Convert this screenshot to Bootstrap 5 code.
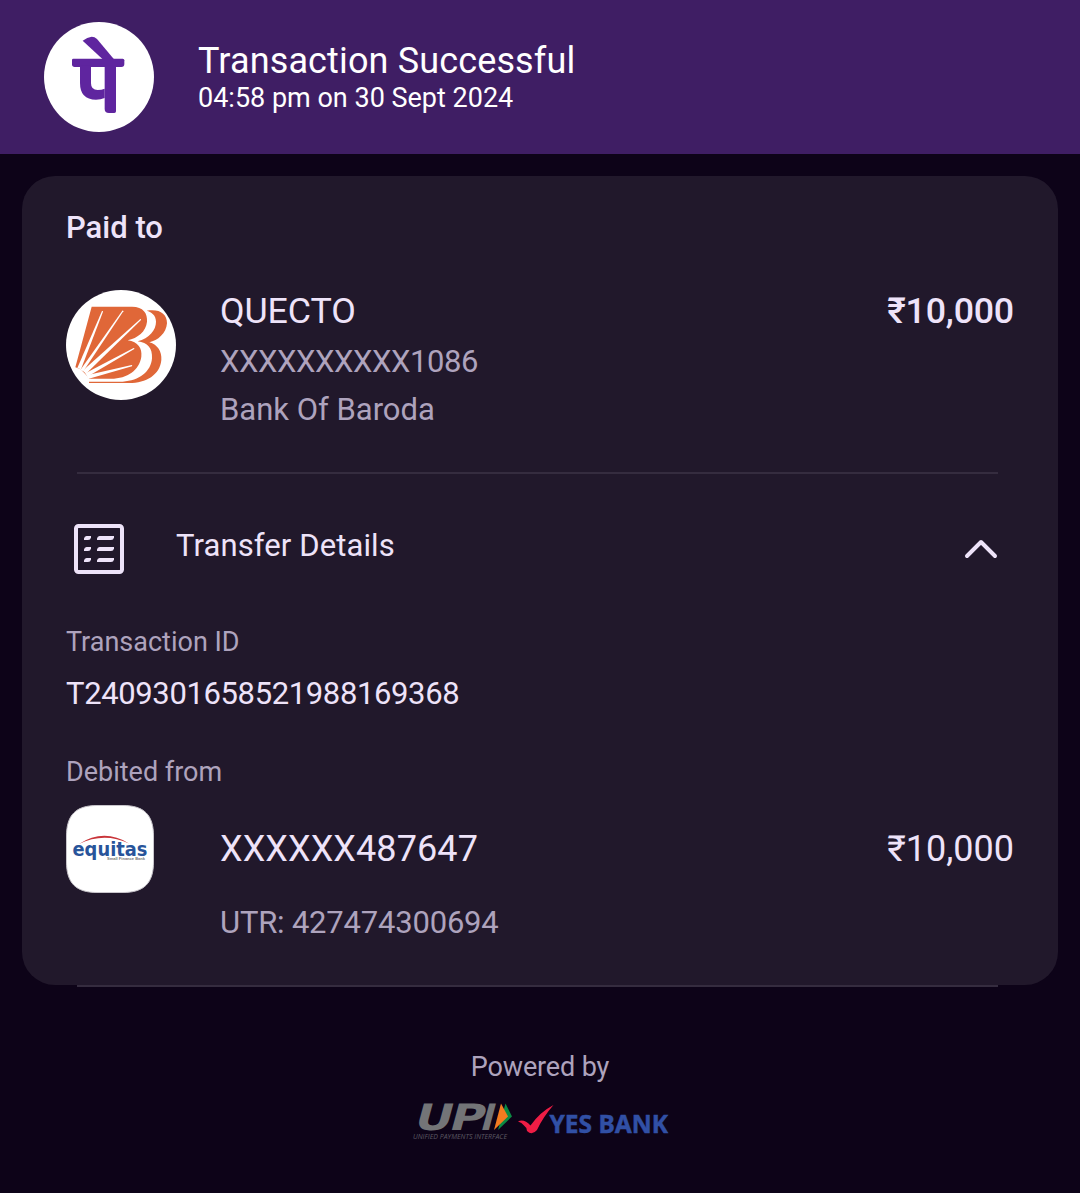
<!DOCTYPE html>
<html lang="en">
<head>
<meta charset="utf-8">
<meta name="viewport" content="width=device-width, initial-scale=1">
<title>Transaction Successful</title>
<link href="https://cdn.jsdelivr.net/npm/bootstrap@5.3.0/dist/css/bootstrap.min.css" rel="stylesheet">
<style>
  body { background: #0d0318; color: #eee3f9; font-family: Roboto, "Noto Sans", sans-serif; min-height: 1193px; }
  svg { display: block; flex: none; }
  .topbar { background: #3f1e64; height: 154px; padding: 22px 44px 0; gap: 44px; }
  .topbar-text { padding-top: 17px; }
  .fs-title { font-size: 36px; line-height: 44px; letter-spacing: .14px; }
  .fs-time { font-size: 27px; line-height: 30px; }
  .receipt { background: #21182b; border-radius: 33px; margin: 22px 22px 0; padding: 34px 44px 0; height: 809px; }
  .paid-label { font-size: 31px; line-height: 35px; font-weight: 500; margin-bottom: 45px; }
  .payee { gap: 44px; }
  .fs-name { font-size: 35.75px; line-height: 42px; letter-spacing: -.1px; }
  .amount-strong { font-weight: 500; letter-spacing: -.2px; }
  .fs-sub { font-size: 31px; line-height: 48px; }
  .acct-mask { letter-spacing: -.44px; padding-top: 1px; margin-top: 5px; }
  .muted { color: #aea3bd; }
  .rule { height: 2px; background: #352c3f; }
  .rule-inner { margin: 38px 16px 0 11px; }
  .rule-outer { margin: 0 82px 0 77px; }
  .details-head { margin: 50px 0 52px; padding: 0 16px 0 8px; height: 50px; }
  .details-title { font-size: 31px; line-height: 43px; margin-left: 52px; letter-spacing: .1px; }
  .fs-cap { font-size: 27px; line-height: 32px; }
  .txn { font-size: 31px; line-height: 40px; margin: 16px 0 42px; letter-spacing: -.37px; }
  .debit { margin-top: 17px; gap: 66px; }
  .fs-acct { font-size: 36px; line-height: 46px; padding-top: 21px; }
  .fs-acct .masked { letter-spacing: .1px; }
  .utr { font-size: 31px; line-height: 40px; margin-top: 31px; letter-spacing: -.2px; }
  .powered { padding-top: 64px; }
  .powered .fs-cap { letter-spacing: -.15px; }
  .brands { margin-top: 12px; }
</style>
</head>
<body>
<header class="topbar d-flex align-items-start text-white">
  <svg width="110" height="110" viewBox="30 30 330 330">
    <circle cx="195" cy="195" r="165" fill="#fff"/>
    <g fill="#5f259f">
      <path d="M146 86Q160 75 173 74Q182 74 189 81L240 142H206Z"/>
      <path d="M118 140H266Q271 140 271 145V156Q271 165 262 165H122Q114 165 114 157V144Q114 140 118 140Z"/>
      <path d="M138 160H171V214Q171 234 191 234Q203 234 212 230V258Q200 263 186 263Q138 263 138 213Z"/>
      <path d="M212 160H246V298Q246 303 241 303H225Q212 303 212 290Z"/>
    </g>
  </svg>
  <div class="topbar-text">
    <div class="fs-title">Transaction Successful</div>
    <div class="fs-time">04:58 pm on 30 Sept 2024</div>
  </div>
</header>

<main>
  <section class="receipt">
    <div class="paid-label">Paid to</div>
    <div class="payee d-flex align-items-start">
      <svg width="110" height="110" viewBox="30 30 330 330">
        <circle cx="195" cy="195" r="165" fill="#fff"/>
        <g fill="#e06738">
          <path d="M107 80H228C262 80 275 100 273 125C270 155 245 174 215 181C247 186 259 205 256 230C250 270 215 296 165 296H99L90 284L74 268L58 262Z"/>
          <path d="M272 92C310 86 333 100 333 130C331 160 305 182 280 187C305 194 318 215 316 240C312 285 270 309 220 309H99V305H200C250 302 285 275 288 235C290 205 275 188 245 184C280 175 300 150 300 125C300 105 285 95 272 92Z"/>
        </g>
        <g fill="#fff">
          <path d="M64 264L138 93Q141 92 141 95L75 268Z"/>
          <path d="M73 270L199 92Q202 91 202 94L82 274Z"/>
          <path d="M80 272L253 117Q256 117 255 120L90 281Z"/>
          <path d="M88 280L233 204Q236 204 235 207L94 290Z"/>
          <path d="M92 286L227 255Q230 256 228 259L96 297Z"/>
        </g>
      </svg>
      <div class="flex-grow-1">
        <div class="d-flex justify-content-between fs-name"><span>QUECTO</span><span class="amount-strong">₹10,000</span></div>
        <div class="fs-sub acct-mask muted">XXXXXXXXXX1086</div>
        <div class="fs-sub muted">Bank Of Baroda</div>
      </div>
    </div>
    <div class="rule rule-inner"></div>

    <div class="details-head d-flex align-items-start">
      <svg width="50" height="50" viewBox="0 0 50 50">
        <rect x="2" y="2" width="46" height="46" rx="2.5" fill="none" stroke="#eee3f9" stroke-width="4"/>
        <g fill="#eee3f9">
          <path d="M12.500 12H17V13.500Q16.500 16 14 16H10V14.500Q10.500 12 12.500 12Z"/>
          <path d="M25.500 12H40V13.500Q39.500 16 37 16H23V14.500Q23.500 12 25.500 12Z"/>
          <path d="M12.500 23H17V24.500Q16.500 27 14 27H10V25.500Q10.500 23 12.500 23Z"/>
          <path d="M25.500 23H40V24.500Q39.500 27 37 27H23V25.500Q23.500 23 25.500 23Z"/>
          <path d="M12.500 34H17V35.500Q16.500 38 14 38H10V36.500Q10.500 34 12.500 34Z"/>
          <path d="M25.500 34H40V35.500Q39.500 38 37 38H23V36.500Q23.500 34 25.500 34Z"/>
        </g>
      </svg>
      <div class="details-title">Transfer Details</div>
      <svg class="ms-auto" width="34" height="50" viewBox="0 0 34 50"><path d="M3 32L17 18L31 32" fill="none" stroke="#eee3f9" stroke-width="4" stroke-linecap="round" stroke-linejoin="round"/></svg>
    </div>

    <div class="fs-cap muted">Transaction ID</div>
    <div class="txn">T2409301658521988169368</div>
    <div class="fs-cap muted">Debited from</div>
    <div class="debit d-flex align-items-start">
      <svg width="88" height="88" viewBox="0 0 88 88">
        <path d="M31 .5H57C78 .5 87.500 10 87.500 31V57C87.500 78 78 87.500 57 87.500H31C10 87.500 .5 78 .5 57V31C.5 10 10 .5 31 .5Z" fill="#fff" stroke="#c9c6cc"/>
        <path d="M13 39Q38 23 63 38.500Q38 27 13 39Z" fill="#c9353a"/>
        <text x="6.500" y="50.800" font-family="DejaVu Sans" font-weight="700" font-size="19.500" textLength="75" lengthAdjust="spacingAndGlyphs" fill="#28549a">equitas</text>
        <text x="41" y="55" font-family="Liberation Sans" font-weight="700" font-size="4" textLength="38" lengthAdjust="spacingAndGlyphs" fill="#777">Small Finance Bank</text>
      </svg>
      <div class="flex-grow-1">
        <div class="d-flex justify-content-between fs-acct"><span class="masked">XXXXXX487647</span><span>₹10,000</span></div>
        <div class="utr muted">UTR: 427474300694</div>
      </div>
    </div>
  </section>
  <div class="rule rule-outer"></div>
</main>

<footer class="powered d-flex flex-column align-items-center">
  <div class="fs-cap muted">Powered by</div>
  <svg class="brands" width="260" height="48" viewBox="410 1095 260 48">
    <g transform="translate(0 1130) skewX(-15)" font-family="DejaVu Sans" font-weight="700" font-size="36.500" fill="#737477">
      <text x="412.500" y="0" textLength="38" lengthAdjust="spacingAndGlyphs">U</text>
      <text x="447.500" y="0" textLength="35" lengthAdjust="spacingAndGlyphs">P</text>
      <text x="479" y="0" textLength="13" lengthAdjust="spacingAndGlyphs">I</text>
    </g>
    <path d="M505.500 1103.500L512 1116.500L498 1130Z" fill="#0c8a43"/>
    <path d="M501 1103.500L508 1116.500L494 1130Z" fill="#f47b20"/>
    <text x="413" y="1138.500" font-family="Open Sans" font-style="italic" font-size="6.500" textLength="94" lengthAdjust="spacingAndGlyphs" fill="#5b5862">UNIFIED PAYMENTS INTERFACE</text>
    <path d="M518 1121.500Q524 1118.500 530.500 1125.500Q540 1112 553.500 1105Q543 1117 537 1130Q532 1136 527 1131Q526.500 1127 523.500 1125Q522 1122.500 518 1121.500Z" fill="#ee1d45"/>
    <text x="549.500" y="1133" font-family="Noto Sans" font-weight="700" font-size="25" textLength="118.500" lengthAdjust="spacingAndGlyphs" fill="#3150a5" stroke="#3150a5" stroke-width=".5">YES BANK</text>
  </svg>
</footer>
<script src="https://cdn.jsdelivr.net/npm/bootstrap@5.3.0/dist/js/bootstrap.bundle.min.js"></script>
</body>
</html>
